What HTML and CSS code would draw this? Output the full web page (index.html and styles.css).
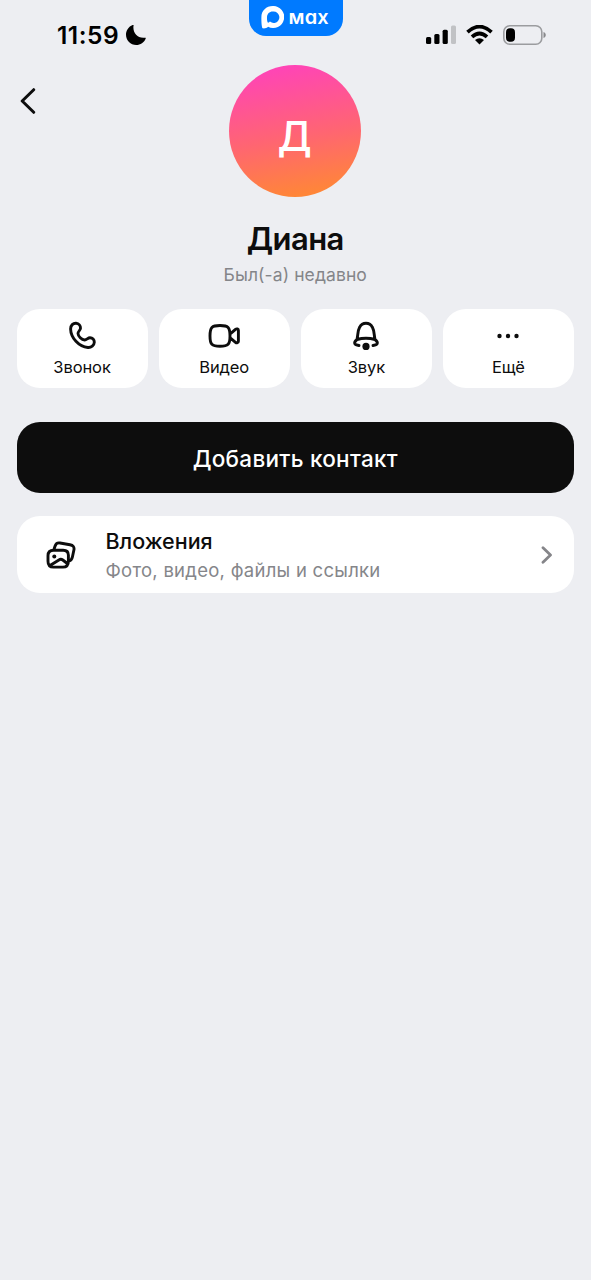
FILE: index.html
```html
<!DOCTYPE html>
<html lang="ru">
<head>
<meta charset="utf-8">
<title>Диана</title>
<link rel="stylesheet" href="styles.css">
</head>
<body>
<header class="status-bar">
  <div class="clock">
    <span class="time">11:59</span>
    <svg class="moon" width="20" height="20" viewBox="0 0 20 20"><path d="M7.600.3C6.200 7.500 11.500 13.900 19 12.700c.6-.1.9.2.7.7C18.200 17.300 14.500 20 10.200 20 4.600 20 0 15.500 0 9.800 0 5.600 2.600 1.700 6.600.1c.6-.3 1.100-.3 1 .2Z"/></svg>
  </div>
  <div class="brand">
    <svg width="23" height="23" viewBox="0 0 23 23"><path fill="#fff" fill-rule="evenodd" d="M11.700 0a11 11 0 1 1-4.600 20.700C5.800 22 3.500 22.800 1.600 22.300.5 21 .3 14 .4 11 .4 4.700 5.300 0 11.700 0Zm0 5.600c-3.300 0-5.600 2.400-5.700 5.600-.1 2 .2 4.600 1 5.500.7.100 1.500-.7 2-1.100a5.700 5.700 0 1 0 2.700-10Z"/></svg>
    <span class="brand-name">мах</span>
  </div>
  <div class="indicators">
    <svg width="30" height="20" viewBox="0 0 30 20"><rect x="0" y="12" width="5.200" height="7" rx="1.500"/><rect x="8.300" y="9" width="5.200" height="10" rx="1.500"/><rect x="16.600" y="4.700" width="5.200" height="14.300" rx="1.500"/><rect x="25" y=".4" width="5" height="18.600" rx="1.500" fill="#c1c2c5"/></svg>
    <svg width="27" height="20" viewBox="0 0 27 20"><path d="M1.500 7.200Q13.500-4 25.500 7.200M6 11.900q7.500-6.800 15 0" fill="none" stroke="#000" stroke-width="3.700"/><path d="M9 15.100q4.500-3.700 9 0L13.500 19.600Z"/></svg>
    <svg width="43" height="20" viewBox="0 0 43 20"><rect x=".8" y=".8" width="38" height="18.400" rx="6" fill="none" stroke="#9b9c9f" stroke-width="1.600"/><rect x="3" y="3.200" width="9" height="13.600" rx="4"/><path d="M40.500 7c3 .8 3 5.200 0 6Z" fill="#88898c"/></svg>
  </div>
</header>
<main class="profile">
  <section class="hero">
    <svg class="back" width="16" height="26" viewBox="0 0 16 26"><path d="M13.700 1.700 2.200 13l11.500 11.300"/></svg>
    <div class="avatar">Д</div>
  </section>
  <h1 class="name">Диана</h1>
  <p class="seen">Был(-а) недавно</p>
  <nav class="actions">
    <div class="action">
      <svg width="32" height="32" viewBox="0 0 32 32"><path d="M4.600 9C4.600 5.200 7.100 3 10.100 3.200c2.700.2 4.500 2.600 4.400 5-.1 1.900-2.600 3.400-2.500 5.300.2 2.900 3.600 6.300 6.700 6.500 1.900.1 3.200-2.300 5.300-2.300 2.500 0 4.400 2 4.300 4.600-.1 3.100-3.100 5.500-6.400 5.200C12.900 26.800 4.800 17.900 4.600 9Z"/></svg>
      <span>Звонок</span>
    </div>
    <div class="action">
      <svg width="32" height="32" viewBox="0 0 32 32"><path d="M12 5.500c8.200 0 10 1.800 10 10.400s-1.800 10.400-10 10.400-10-1.800-10-10.400 1.800-10.400 10-10.400ZM22.500 13.700l5-4.300c1.200-1 2.900-.5 2.900 1.100v10.700c0 1.600-1.700 2.100-2.900 1.100L22.500 18.100"/></svg>
      <span>Видео</span>
    </div>
    <div class="action">
      <svg width="32" height="32" viewBox="0 0 32 32"><path d="M7 19.500C8 15 7.700 10.500 9.600 7.300 12.200 1.900 19.800 1.900 22.400 7.300c1.900 3.200 1.600 7.700 2.600 12.200M7 19.500c5.300-1.500 12.700-1.500 18 0 1.400 1.100 2.800 2.700 2.200 4.100-.6 1.200-2.500 1.600-4.200 1.900M7 19.500c-1.400 1.100-2.800 2.700-2.200 4.100.6 1.200 2.500 1.600 4.200 1.900"/><circle class="solid" cx="16" cy="26.400" r="3.600"/></svg>
      <span>Звук</span>
    </div>
    <div class="action">
      <svg width="32" height="32" viewBox="0 0 32 32"><g class="solid"><circle cx="7.500" cy="16" r="2.200"/><circle cx="16" cy="16" r="2.200"/><circle cx="24.500" cy="16" r="2.200"/></g></svg>
      <span>Ещё</span>
    </div>
  </nav>
  <div class="add-contact">Добавить контакт</div>
  <div class="media">
    <svg class="media-icon" width="30" height="28" viewBox="0 0 30 28"><path d="M8 8.300 9 5.200C9.800 2.600 11.300 1.500 14 2l10 1.700c3.200.6 4.500 2.400 3.900 5.300l-1.500 7c-.5 2.600-1.700 3.900-4.100 4.300M7.500 9.300h9.700c3.600 0 5.200 1.500 5.200 5v5.900c0 4-1.600 5.900-5.500 5.900H7.500C3.500 26.100 2 24.300 2 20.200v-5.400c0-3.900 1.700-5.500 5.500-5.500ZM4 24.500l8.900-5.600q2-1.300 3.900.1l4.500 3.500"/><circle class="solid" cx="8.300" cy="15.400" r="2"/></svg>
    <div class="media-text">
      <span class="media-title">Вложения</span>
      <span class="media-sub">Фото, видео, файлы и ссылки</span>
    </div>
    <svg class="chevron" width="12" height="18" viewBox="0 0 12 18"><path d="m2 1.800 7.500 7.200L2 16.200"/></svg>
  </div>
</main>
</body>
</html>
```
FILE: styles.css
```css
* { box-sizing: border-box; }
body {
  margin: 0;
  min-height: 1280px;
  background: #edeef2;
  color: #0d0d0d;
  font-family: Inter, "Noto Sans", sans-serif;
}
svg { display: block; flex: none; }
.status-bar {
  display: grid;
  grid-template-columns: 1fr 94px 1fr;
  height: 65px;
}
.clock { display: flex; align-items: center; gap: 7px; height: 70px; padding-left: 57px; }
.time { font-size: 24.5px; font-weight: 600; letter-spacing: 0.5px; color: #000; }
.brand {
  display: flex;
  gap: 5px;
  height: 36px;
  padding: 6px 0 0 12px;
  border-radius: 0 0 17px 17px;
  background: #007aff;
  color: #fff;
}
.brand-name { font-size: 20px; font-weight: 600; line-height: 22px; font-feature-settings: "cv11"; letter-spacing: 0.2px; }
.indicators {
  display: flex;
  justify-content: flex-end;
  align-items: center;
  gap: 10px;
  height: 70px;
  padding-right: 45px;
}
.profile { padding: 0 17px 0 16.5px; }
.hero {
  display: grid;
  grid-template-columns: 1fr 132px 1fr;
  height: 132px;
}
.back { margin: 23px 0 0 3px; fill: none; stroke: #0d0d0d; stroke-width: 3; stroke-linecap: round; stroke-linejoin: round; }
.avatar {
  display: flex;
  align-items: center;
  justify-content: center;
  height: 132px;
  border-radius: 50%;
  padding: 10px 1px 0 0;
  background: linear-gradient(170deg, #ff45b5 8%, #ff6572 54%, #ff8638 92%);
  color: #fff;
  font-size: 41px;
  font-weight: 500;
}
.name { margin: 22px 0 0; text-align: center; font-size: 31px; line-height: 40px; font-weight: 600; letter-spacing: -0.6px; }
.seen { margin: 4px 0 0; text-align: center; font-size: 17.5px; line-height: 24px; letter-spacing: .1px; color: #848589; }
.actions { display: grid; grid-template-columns: repeat(4, 1fr); gap: 11px; height: 79px; margin-top: 22px; }
.action {
  display: flex;
  flex-direction: column;
  align-items: center;
  padding-top: 11px;
  border-radius: 23px;
  background: #fff;
}
.action svg, .media-icon { fill: none; stroke: #0d0d0d; stroke-width: 2.9; stroke-linecap: round; stroke-linejoin: round; }
.action .solid, .media .solid { fill: #0d0d0d; stroke: none; }
.action span { margin-top: 4px; font-size: 16.5px; line-height: 22px; letter-spacing: -0.1px; }
.add-contact {
  display: flex;
  align-items: center;
  justify-content: center;
  height: 71px;
  margin-top: 34px;
  border-radius: 23px;
  background: #0d0d0d;
  color: #fff;
  font-size: 22.5px;
  font-weight: 500;
  letter-spacing: 0.27px;
  padding-top: 1px;
}
.media {
  display: flex;
  align-items: center;
  height: 77px;
  margin-top: 23px;
  padding: 0 21px 0 29px;
  border-radius: 23px;
  background: #fff;
}
.media-text { display: flex; flex: 1; flex-direction: column; padding-left: 30px; }
.media-title { font-size: 21.5px; line-height: 30px; font-weight: 500; }
.media-sub { font-size: 18.5px; line-height: 28px; letter-spacing: 0.26px; color: #85868a; }
.chevron { fill: none; stroke: #858589; stroke-width: 2.8; stroke-linecap: round; stroke-linejoin: round; }
```
